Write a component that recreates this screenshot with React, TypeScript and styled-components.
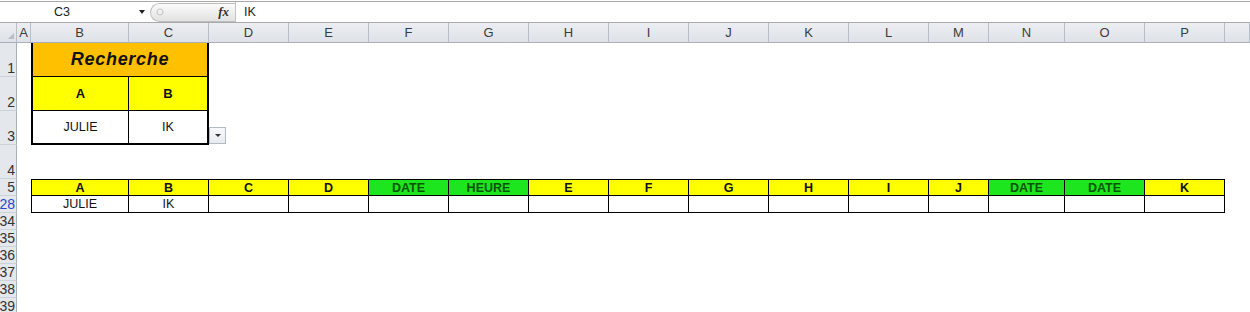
import styled, { createGlobalStyle } from "styled-components";

const COLS =
  "17px 14px 98px 80px 80px 80px 80px 80px 80px 80px 80px 80px 80px 60px 76px 80px 80px 1fr";

const GlobalStyle = createGlobalStyle`
  html, body {
    margin: 0;
    padding: 0;
    background: #fff;
    overflow: hidden;
  }
  body {
    font-family: "Liberation Sans", Arial, sans-serif;
  }
`;

const Screen = styled.div`
  width: 1250px;
  height: 312px;
  padding-top: 1px;
  box-sizing: border-box;
  overflow: hidden;
`;

const FormulaBar = styled.div`
  display: flex;
  align-items: center;
  height: 22px;
  box-sizing: border-box;
  border-top: 1px solid #a9a9a9;
  border-bottom: 1px solid #a9a9a9;
`;

const NameBox = styled.div`
  width: 124px;
  text-align: center;
  font-size: 12.5px;
  color: #222;
`;

const NameArrow = styled.div`
  width: 26px;
  display: flex;
  justify-content: flex-end;
  padding-right: 5px;
  box-sizing: border-box;
  &::after {
    content: "";
    border-left: 3.5px solid transparent;
    border-right: 3.5px solid transparent;
    border-top: 4px solid #222;
  }
`;

const Pill = styled.div`
  width: 85px;
  height: 19px;
  box-sizing: border-box;
  border: 1px solid #bdbdbd;
  border-right: none;
  border-radius: 10px 0 0 10px;
  background: linear-gradient(#fbfbfb, #e2e2e2);
  display: flex;
  align-items: center;
  justify-content: space-between;
  padding: 0 6px 0 5px;
`;

const FxLabel = styled.span`
  font-family: "Liberation Serif", "Times New Roman", serif;
  font-style: italic;
  font-weight: bold;
  font-size: 13px;
  color: #333;
`;

const FormulaInput = styled.div`
  flex: 1;
  height: 100%;
  border-left: 1px solid #c3c3c3;
  padding-left: 8px;
  font-size: 12.5px;
  color: #222;
  display: flex;
  align-items: center;
`;

const HeaderRow = styled.div`
  display: grid;
  grid-template-columns: ${COLS};
  height: 20px;
  box-sizing: border-box;
  background: linear-gradient(#eceef2, #dee2e8);
  border-bottom: 1px solid #a9b0ba;
`;

const Corner = styled.div`
  position: relative;
  border-right: 1px solid #b8bec7;
  &::after {
    content: "";
    position: absolute;
    right: 2px;
    bottom: 3px;
    border-left: 6px solid transparent;
    border-bottom: 6px solid #b9bec6;
  }
`;

const ColHead = styled.div`
  display: flex;
  align-items: center;
  justify-content: center;
  border-right: 1px solid #b8bec7;
  font-size: 13px;
  color: #3c3c3c;
`;

const Row = styled.div<{ $h: number }>`
  display: grid;
  grid-template-columns: ${COLS};
  height: ${(p) => p.$h}px;
`;

const RowNum = styled.div<{ $active?: boolean }>`
  background: #e4e8ed;
  border-right: 1px solid #a9b0ba;
  border-bottom: 1px solid #cdd2d9;
  box-sizing: border-box;
  display: flex;
  align-items: flex-end;
  justify-content: flex-end;
  padding: 0 1px 1px 0;
  overflow: hidden;
  font-size: 14px;
  line-height: 1;
  white-space: nowrap;
  color: ${(p) => (p.$active ? "#2448c8" : "#333")};
`;

const Blank = styled.div``;

const Cell = styled.div<{
  $span?: number;
  $bg?: string;
  $b?: string;
  $bold?: boolean;
  $italic?: boolean;
  $size?: number;
  $color?: string;
}>`
  grid-column: span ${(p) => p.$span ?? 1};
  box-sizing: border-box;
  background: ${(p) => p.$bg ?? "transparent"};
  border: solid #000;
  border-width: ${(p) => p.$b ?? "0"};
  display: flex;
  align-items: center;
  justify-content: center;
  font-size: ${(p) => p.$size ?? 12.5}px;
  font-weight: ${(p) => (p.$bold ? "bold" : "normal")};
  font-style: ${(p) => (p.$italic ? "italic" : "normal")};
  color: ${(p) => p.$color ?? "#111"};
  white-space: nowrap;
  overflow: hidden;
`;

const Title = styled.span`
  letter-spacing: 0.7px;
`;

const DropCell = styled.div`
  display: flex;
  align-items: flex-end;
  padding-bottom: 1px;
`;

const DropButton = styled.div`
  width: 17px;
  height: 17px;
  box-sizing: border-box;
  border: 1px solid #b4bac4;
  background: linear-gradient(#f7f8fa, #e8ebef);
  display: flex;
  align-items: center;
  justify-content: center;
  &::after {
    content: "";
    border-left: 3px solid transparent;
    border-right: 3px solid transparent;
    border-top: 3px solid #333;
  }
`;

const YELLOW = "#ffff00";
const ORANGE = "#ffc000";
const GREEN = "#1ee61e";

const letters = ["A", "B", "C", "D", "E", "F", "G", "H", "I", "J", "K", "L", "M", "N", "O", "P", ""];

const headers = [
  "A", "B", "C", "D", "DATE", "HEURE", "E", "F", "G", "H", "I", "J", "DATE", "DATE", "K",
];

export default function App() {
  return (
    <Screen>
      <GlobalStyle />
      <FormulaBar>
        <NameBox>C3</NameBox>
        <NameArrow />
        <Pill>
          <svg width="8" height="8" viewBox="0 0 8 8">
            <circle cx="4" cy="4" r="3" fill="none" stroke="#c9c9c9" strokeWidth="1.2" />
          </svg>
          <FxLabel>fx</FxLabel>
        </Pill>
        <FormulaInput>IK</FormulaInput>
      </FormulaBar>

      <HeaderRow>
        <Corner />
        {letters.map((l, i) => (
          <ColHead key={i}>{l}</ColHead>
        ))}
      </HeaderRow>

      <Row $h={34}>
        <RowNum>1</RowNum>
        <Blank />
        <Cell $span={2} $bg={ORANGE} $b="0 2px 1px 2px" $bold $italic $size={18}>
          <Title>Recherche</Title>
        </Cell>
      </Row>
      <Row $h={34}>
        <RowNum>2</RowNum>
        <Blank />
        <Cell $bg={YELLOW} $b="0 1px 1px 2px" $bold $size={13}>
          A
        </Cell>
        <Cell $bg={YELLOW} $b="0 2px 1px 0" $bold $size={13}>
          B
        </Cell>
      </Row>
      <Row $h={34}>
        <RowNum>3</RowNum>
        <Blank />
        <Cell $b="0 1px 2px 2px">JULIE</Cell>
        <Cell $b="0 2px 2px 0">IK</Cell>
        <DropCell>
          <DropButton />
        </DropCell>
      </Row>
      <Row $h={34}>
        <RowNum>4</RowNum>
      </Row>
      <Row $h={17}>
        <RowNum>5</RowNum>
        <Blank />
        {headers.map((h, i) => {
          const green = h === "DATE" || h === "HEURE";
          return (
            <Cell
              key={i}
              $bg={green ? GREEN : YELLOW}
              $color={green ? "#075407" : "#111"}
              $b={i === 0 ? "1px 1px 1px 1px" : "1px 1px 1px 0"}
              $bold
              $size={12.5}
            >
              {h}
            </Cell>
          );
        })}
      </Row>
      <Row $h={17}>
        <RowNum $active>28</RowNum>
        <Blank />
        {headers.map((_, i) => (
          <Cell key={i} $b={i === 0 ? "0 1px 1px 1px" : "0 1px 1px 0"}>
            {i === 0 ? "JULIE" : i === 1 ? "IK" : ""}
          </Cell>
        ))}
      </Row>
      {["34", "35", "36", "37", "38", "39"].map((n) => (
        <Row key={n} $h={17}>
          <RowNum>{n}</RowNum>
        </Row>
      ))}
    </Screen>
  );
}
